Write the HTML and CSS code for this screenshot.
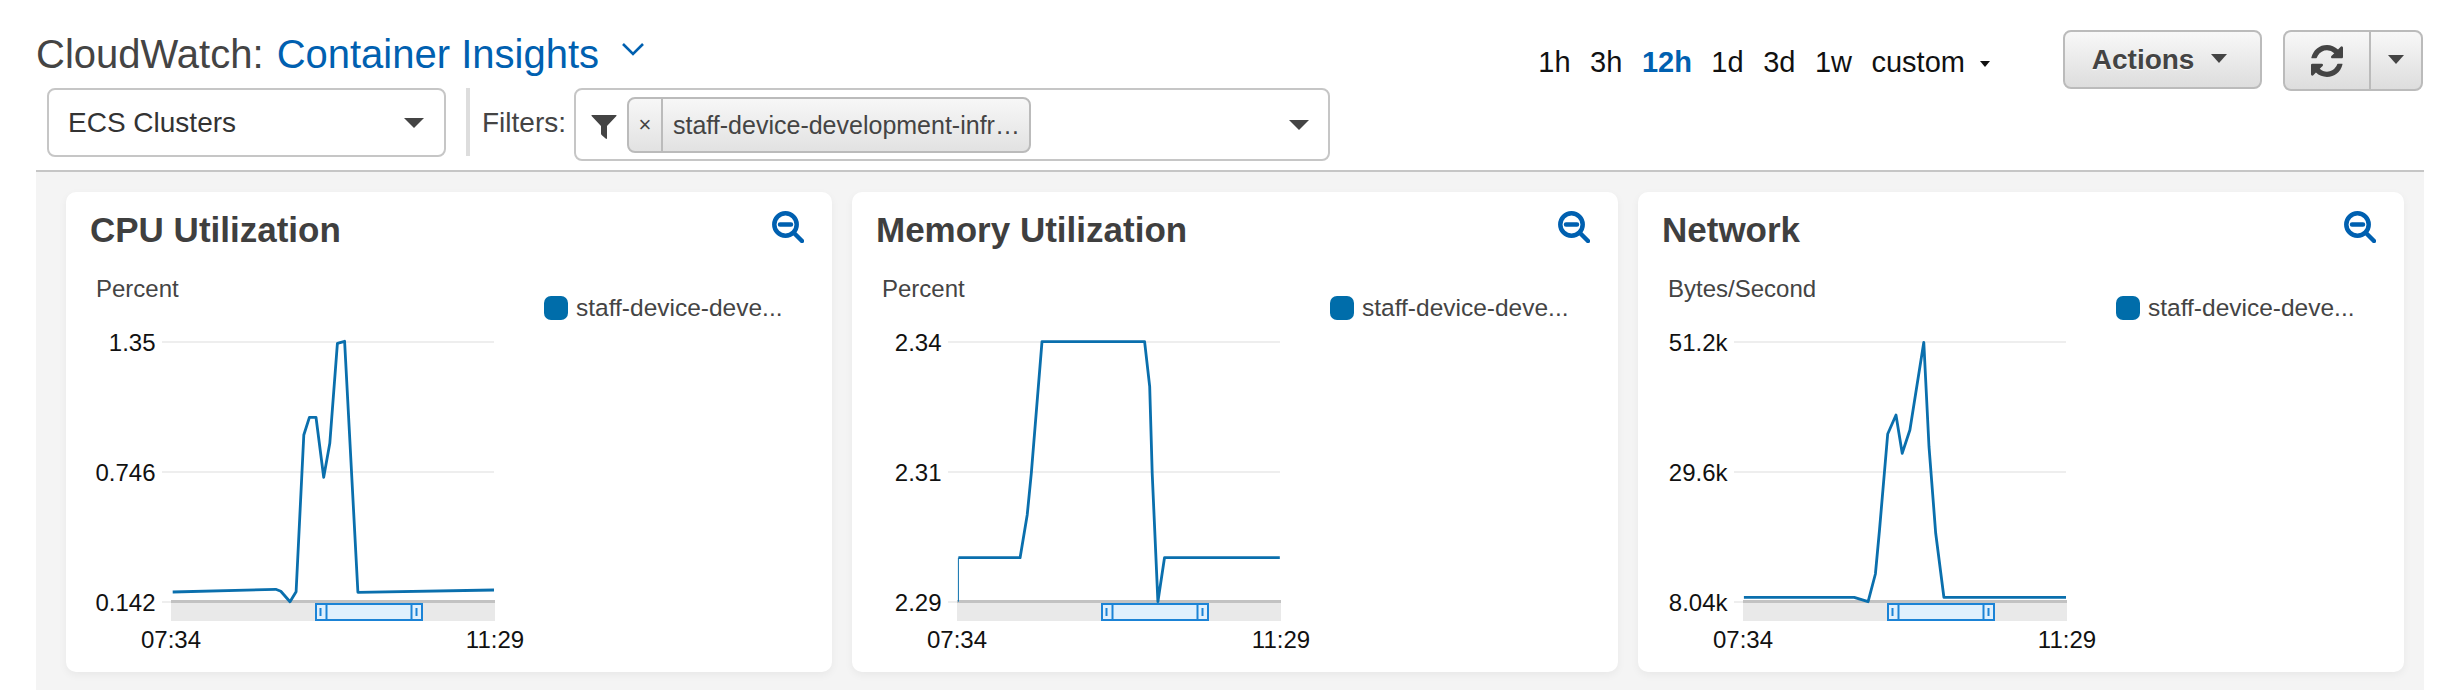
FILE: index.html

```html
<!DOCTYPE html>
<html lang="en">
<head>
  <meta charset="UTF-8" />
  <title>CloudWatch: Container Insights</title>
  <link rel="stylesheet" href="styles.css">
</head>
<body>
  <div class="page">
    <header class="top">
      <div class="top-left">
        <h1 class="title">CloudWatch: <a class="title-link">Container Insights</a>
          <svg class="chevron" width="22" height="13" viewBox="0 0 22 13"><path d="M1 1l10 10L21 1" fill="none" stroke="#0060b0" stroke-width="2.6"/></svg>
        </h1>
        <div class="filter-row">
          <div class="select">ECS Clusters <span class="caret"></span></div>
          <div class="divider"></div>
          <div class="filter-label">Filters:</div>
          <div class="filter-box">
            <svg class="funnel" width="26" height="26" viewBox="0 0 26 26"><path d="M1 1h24q1 0 .4 1L16 12v12q0 1.600-1.400.6l-4-3.600q-.6-.5-.6-1.400v-7.600L.6 2Q0 1 1 1z" fill="#444"/></svg>
            <div class="chip">
              <span class="chip-x">×</span>
              <span class="chip-text">staff-device-development-infr…</span>
            </div>
            <span class="caret filter-caret"></span>
          </div>
        </div>
      </div>
      <div class="top-right">
        <nav class="ranges">
          <a>1h</a><a>3h</a><a class="active">12h</a><a>1d</a><a>3d</a><a>1w</a><a>custom <span class="caret-small"></span></a>
        </nav>
        <button class="btn btn-actions">Actions <span class="caret caret-btn"></span></button>
        <div class="btn btn-group">
          <span class="refresh-cell">
            <svg width="32" height="32" viewBox="128 128 1536 1536"><path fill="#444" d="M1639 1056q0 5-1 7-64 268-268 434.500t-478 166.500q-146 0-282.500-55t-243.500-157l-129 129q-19 19-45 19t-45-19-19-45v-448q0-26 19-45t45-19h448q26 0 45 19t19 45-19 45l-137 137q71 66 161 102t187 36q134 0 250-65t186-179q11-17 53-117 8-23 30-23h192q13 0 22.500 9.500t9.500 22.500zm25-800v448q0 26-19 45t-45 19h-448q-26 0-45-19t-19-45 19-45l138-138q-148-137-349-137-134 0-250 65t-186 179q-11 17-53 117-8 23-30 23h-199q-13 0-22.500-9.500t-9.500-22.500v-7q65-268 270-434.500t480-166.500q146 0 284 55.500t245 156.500l130-129q19-19 45-19t45 19 19 45z"/></svg>
          </span>
          <span class="refresh-more"><span class="caret caret-btn"></span></span>
        </div>
      </div>
    </header>

    <main class="cards">
      <section class="card">
        <div class="card-head">
          <h2>CPU Utilization</h2>
          <svg class="zoom-out" width="32" height="32" viewBox="0 0 32 32"><circle cx="13.500" cy="13.500" r="11.200"/><path d="M8 13.500h11M22 22l8 8"/></svg>
        </div>
        <div class="card-body">
          <svg class="chart" width="446" height="390" viewBox="0 0 446 390">
            <text class="unit" x="6" y="27">Percent</text>
            <path class="grid" d="M72 72H404M72 202H404M72 332H404"/>
            <text class="tick" x="65.500" y="81">1.35</text>
            <text class="tick" x="65.500" y="211">0.746</text>
            <text class="tick" x="65.500" y="341">0.142</text>
            <rect class="mini" x="81" y="330" width="324" height="21"/>
            <rect class="mini-top" x="81" y="330" width="324" height="3"/>
            <polyline class="series" points="82.700,322 185.700,319.300 190.800,321.300 200,331.700 206.100,321.700 213.800,165 219.400,147.300 226,147.300 233.700,207.300 239.800,173.300 247.400,73.300 254.600,71.300 267.900,322.300 404,320"/>
            <rect class="sel" x="226" y="334" width="106" height="16"/>
            <path class="sel-edge" d="M236.500 334v16M321.500 334v16"/>
            <path class="sel-grip" d="M230.500 338v8M326.500 338v8"/>
            <text class="tick-x" x="81" y="378">07:34</text>
            <text class="tick-x" x="405" y="378">11:29</text>
          </svg>
          <div class="legend"><span class="swatch"></span>staff-device-deve...</div>
        </div>
      </section>

      <section class="card">
        <div class="card-head">
          <h2>Memory Utilization</h2>
          <svg class="zoom-out" width="32" height="32" viewBox="0 0 32 32"><circle cx="13.500" cy="13.500" r="11.200"/><path d="M8 13.500h11M22 22l8 8"/></svg>
        </div>
        <div class="card-body">
          <svg class="chart" width="446" height="390" viewBox="0 0 446 390">
            <text class="unit" x="6" y="27">Percent</text>
            <path class="grid" d="M72 72H404M72 202H404M72 332H404"/>
            <text class="tick" x="65.500" y="81">2.34</text>
            <text class="tick" x="65.500" y="211">2.31</text>
            <text class="tick" x="65.500" y="341">2.29</text>
            <rect class="mini" x="81" y="330" width="324" height="21"/>
            <rect class="mini-top" x="81" y="330" width="324" height="3"/>
            <path class="series-thin" d="M82.400 331.700V287.700"/>
            <polyline class="series" points="82.400,287.700 144.100,287.700 151.200,245 155.300,203.300 166,71.700 268.600,71.700 273.700,116.700 276.200,203.300 281.900,331.700 288.500,287.700 403.800,287.700"/>
            <rect class="sel" x="226" y="334" width="106" height="16"/>
            <path class="sel-edge" d="M236.500 334v16M321.500 334v16"/>
            <path class="sel-grip" d="M230.500 338v8M326.500 338v8"/>
            <text class="tick-x" x="81" y="378">07:34</text>
            <text class="tick-x" x="405" y="378">11:29</text>
          </svg>
          <div class="legend"><span class="swatch"></span>staff-device-deve...</div>
        </div>
      </section>

      <section class="card">
        <div class="card-head">
          <h2>Network</h2>
          <svg class="zoom-out" width="32" height="32" viewBox="0 0 32 32"><circle cx="13.500" cy="13.500" r="11.200"/><path d="M8 13.500h11M22 22l8 8"/></svg>
        </div>
        <div class="card-body">
          <svg class="chart" width="446" height="390" viewBox="0 0 446 390">
            <text class="unit" x="6" y="27">Bytes/Second</text>
            <path class="grid" d="M72 72H404M72 202H404M72 332H404"/>
            <text class="tick" x="65.500" y="81">51.2k</text>
            <text class="tick" x="65.500" y="211">29.6k</text>
            <text class="tick" x="65.500" y="341">8.04k</text>
            <rect class="mini" x="81" y="330" width="324" height="21"/>
            <rect class="mini-top" x="81" y="330" width="324" height="3"/>
            <polyline class="series" points="81.900,327.300 192.200,327.300 206.100,331.700 213.400,304 217.500,260 225.700,164 234,145 240.200,183.300 247.900,160 261.800,72.300 267,176.700 273.700,263.300 281.900,327.300 404,327.300"/>
            <rect class="sel" x="226" y="334" width="106" height="16"/>
            <path class="sel-edge" d="M236.500 334v16M321.500 334v16"/>
            <path class="sel-grip" d="M230.500 338v8M326.500 338v8"/>
            <text class="tick-x" x="81" y="378">07:34</text>
            <text class="tick-x" x="405" y="378">11:29</text>
          </svg>
          <div class="legend"><span class="swatch"></span>staff-device-deve...</div>
        </div>
      </section>
    </main>
  </div>
</body>
</html>
```

FILE: styles.css

```css
* {
  box-sizing: border-box;
}
html, body {
  height: 100%;
}
body {
  margin: 0;
  background-color: #fff;
  font-family: "Liberation Sans", Arial, sans-serif;
  color: #444;
  overflow: hidden;
}
.page {
  margin: 0 14px 0 36px;
  height: 100%;
  display: flex;
  flex-direction: column;
}

/* header */
.top {
  height: 172px;
  flex: none;
  display: flex;
  justify-content: space-between;
  border-bottom: 2px solid #c6c6c6;
}
.title {
  margin: 30px 0 0;
  height: 48px;
  font-size: 40px;
  line-height: 48px;
  font-weight: normal;
  color: #444;
  white-space: nowrap;
}
.title-link {
  margin-left: 2px;
  color: #0060b0;
}
.chevron {
  margin-left: 12px;
  vertical-align: 12px;
}
.filter-row {
  display: flex;
  align-items: flex-start;
  margin: 10px 0 0 11px;
}
.select {
  width: 399px;
  height: 69px;
  display: flex;
  align-items: center;
  justify-content: space-between;
  padding: 0 20px 0 19px;
  border: 2px solid #c6c6c6;
  border-radius: 8px;
  font-size: 28px;
  color: #333;
}
.divider {
  width: 4px;
  height: 68px;
  margin: 0 12px 0 20px;
  background-color: #ddd;
}
.filter-label {
  height: 69px;
  line-height: 69px;
  font-size: 28px;
  margin-right: 8px;
}
.filter-box {
  width: 756px;
  height: 73px;
  display: flex;
  align-items: center;
  padding: 0 19px 0 15px;
  border: 2px solid #c6c6c6;
  border-radius: 8px;
}
.funnel {
  flex: none;
  margin-top: 5px;
}
.chip {
  width: 404px;
  height: 56px;
  display: flex;
  margin-left: 10px;
  border: 2px solid #bbb;
  border-radius: 8px;
  background: linear-gradient(#f7f7f7, #e2e2e2);
  font-size: 25px;
  line-height: 52px;
}
.chip-x {
  width: 34px;
  text-align: center;
  border-right: 2px solid #bbb;
  font-size: 22px;
}
.chip-text {
  padding-left: 10px;
  white-space: nowrap;
}
.caret {
  display: inline-block;
  width: 0;
  height: 0;
  border-left: 10px solid transparent;
  border-right: 10px solid transparent;
  border-top: 10px solid #444;
}
.filter-caret {
  margin-left: auto;
}
.top-right {
  display: flex;
  align-items: flex-start;
  padding: 30px 1px 0 0;
}
.ranges {
  display: flex;
  gap: 19.500px;
  height: 66px;
  line-height: 64px;
  font-size: 29px;
  color: #111;
  margin-right: 73px;
}
.ranges .active {
  color: #0060b0;
  font-weight: bold;
}
.caret-small {
  display: inline-block;
  margin-left: 7px;
  vertical-align: middle;
  border-left: 5px solid transparent;
  border-right: 5px solid transparent;
  border-top: 6px solid #111;
}
.btn {
  border: 2px solid #bbb;
  border-radius: 8px;
  background: linear-gradient(#f8f8f8, #dddddd);
  color: #444;
  font-family: inherit;
}
.btn-actions {
  width: 199px;
  height: 59px;
  padding: 0 6px 0 0;
  margin-right: 21px;
  font-size: 28px;
  font-weight: bold;
  text-shadow: 0 1px 1px #fff;
}
.caret-btn {
  border-left-width: 8px;
  border-right-width: 8px;
  border-top-width: 9px;
  margin-left: 9px;
  vertical-align: 6px;
}
.btn-group {
  width: 140px;
  height: 61px;
  display: flex;
}
.refresh-cell {
  width: 84px;
  display: flex;
  align-items: center;
  justify-content: center;
}
.refresh-more {
  flex: 1;
  display: flex;
  align-items: center;
  justify-content: center;
  border-left: 2px solid #bbb;
}
.refresh-more .caret-btn {
  margin: 0 0 2px;
  vertical-align: baseline;
}

/* cards */
.cards {
  flex: 1;
  display: grid;
  grid-template-columns: repeat(3, 766px);
  gap: 20px;
  align-content: start;
  padding: 20px 0 0 30px;
  background-color: #f4f4f4;
}
.card {
  height: 480px;
  padding: 17px 28px 0 24px;
  background-color: #fff;
  border-radius: 10px;
  box-shadow: 0 3px 8px rgba(0, 0, 0, 0.05);
}
.card-head {
  display: flex;
  justify-content: space-between;
  align-items: flex-start;
}
.card-head h2 {
  margin: 0;
  font-size: 35px;
  line-height: 42px;
  font-weight: bold;
  color: #3f3f3f;
}
.zoom-out {
  margin-top: 2px;
  fill: none;
  stroke: #0060b0;
  stroke-width: 4.500;
  stroke-linecap: round;
}
.card-body {
  display: flex;
  margin-top: 19px;
}
.chart {
  flex: none;
  font-size: 24px;
}
.unit {
  fill: #444;
}
.tick {
  fill: #111;
  text-anchor: end;
}
.tick-x {
  fill: #111;
  text-anchor: middle;
}
.grid {
  fill: none;
  stroke: #eee;
  stroke-width: 2;
}
.mini {
  fill: #e9e9e9;
}
.mini-top {
  fill: #c2c2c2;
}
.series {
  fill: none;
  stroke: #0a6fad;
  stroke-width: 2.800;
  stroke-linejoin: round;
}
.series-thin {
  fill: none;
  stroke: #0a6fad;
  stroke-width: 1;
}
.sel {
  fill: #e0f0fd;
  stroke: #1b83d6;
  stroke-width: 2;
}
.sel-edge {
  stroke: #1b83d6;
  stroke-width: 2;
}
.sel-grip {
  stroke: #1b83d6;
  stroke-width: 2;
}
.legend {
  display: flex;
  align-items: center;
  gap: 8px;
  height: 24px;
  margin: 26px 0 0 8px;
  font-size: 24.500px;
  white-space: nowrap;
}
.swatch {
  width: 24px;
  height: 24px;
  border-radius: 7px;
  background-color: #006daa;
}
```
